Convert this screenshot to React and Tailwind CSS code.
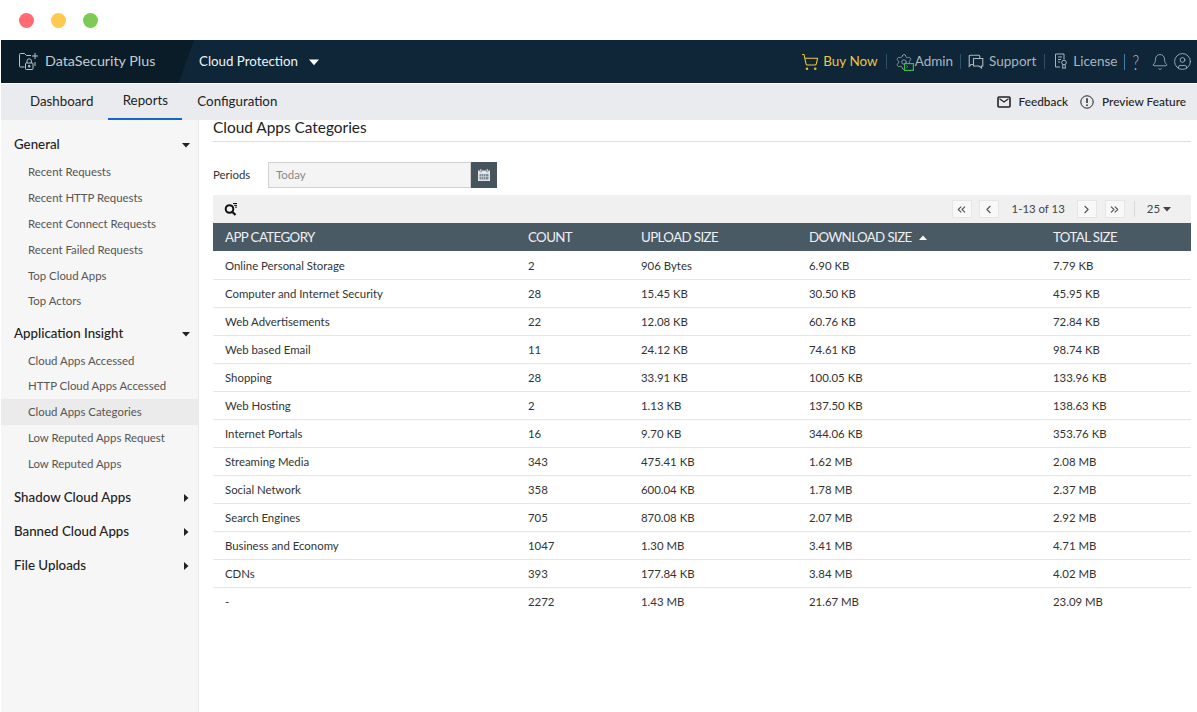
import React from "react";
import { ChevronsLeft, ChevronLeft, ChevronRight, ChevronsRight, ShoppingCart, Bell, CircleUser, Settings } from "lucide-react";

const rows = [
  ["Online Personal Storage", "2", "906 Bytes", "6.90 KB", "7.79 KB"],
  ["Computer and Internet Security", "28", "15.45 KB", "30.50 KB", "45.95 KB"],
  ["Web Advertisements", "22", "12.08 KB", "60.76 KB", "72.84 KB"],
  ["Web based Email", "11", "24.12 KB", "74.61 KB", "98.74 KB"],
  ["Shopping", "28", "33.91 KB", "100.05 KB", "133.96 KB"],
  ["Web Hosting", "2", "1.13 KB", "137.50 KB", "138.63 KB"],
  ["Internet Portals", "16", "9.70 KB", "344.06 KB", "353.76 KB"],
  ["Streaming Media", "343", "475.41 KB", "1.62 MB", "2.08 MB"],
  ["Social Network", "358", "600.04 KB", "1.78 MB", "2.37 MB"],
  ["Search Engines", "705", "870.08 KB", "2.07 MB", "2.92 MB"],
  ["Business and Economy", "1047", "1.30 MB", "3.41 MB", "4.71 MB"],
  ["CDNs", "393", "177.84 KB", "3.84 MB", "4.02 MB"],
  ["-", "2272", "1.43 MB", "21.67 MB", "23.09 MB"],
];

const Caret = ({ dir = "down", className = "" }) => (
  <svg width="8" height="8" viewBox="0 0 8 8" className={className} fill="currentColor">
    {dir === "down" && <path d="M0 2h8L4 6.500z" />}
    {dir === "right" && <path d="M2 0v8l4.500-4z" />}
    {dir === "up" && <path d="M0 6h8L4 1.500z" />}
  </svg>
);

const Logo = () => (
  <svg width="21" height="20" viewBox="0 0 21 20" fill="none" stroke="#b9c4cb" strokeWidth="1">
    <path d="M6.500 15H2.500a1 1 0 0 1-1-1V2.500a1 1 0 0 1 1-1h4l2 2H13" />
    <path d="M17 1v6M14 4h6" />
    <path d="M17 10v4" />
    <rect x="7.500" y="11" width="7.500" height="6.500" rx="0.800" />
    <path d="M9 11V9a2.200 2.200 0 0 1 4.400 0v2" />
    <circle cx="11.200" cy="14.200" r="0.900" fill="#b9c4cb" />
  </svg>
);

const AdminIcon = () => (
  <span className="relative block w-[19px] h-[18px]">
    <Settings size={18} strokeWidth={1.100} className="text-[#9aabb6]" />
    <svg width="10" height="8" viewBox="0 0 10 8" fill="none" className="absolute right-0 bottom-0">
      <rect x="0.600" y="0.600" width="8.800" height="6.800" fill="#0e2638" stroke="#3fb54a" strokeWidth="1.200" />
      <path d="M2.300 2.500l1.500 1.200-1.500 1.200" stroke="#3fb54a" strokeWidth="0.800" />
    </svg>
  </span>
);

const ChatIcon = () => (
  <svg width="16" height="15" viewBox="0 0 16 15" fill="none" stroke="#a9b6bf" strokeWidth="1.100">
    <path d="M5 10.500H3l-1.800 1.800V2.200a1 1 0 0 1 1-1h8.600a1 1 0 0 1 1 1V4" />
    <path d="M5.500 4.500h9.300v7.500H13.500v2L11 12H5.500z" />
  </svg>
);

const LicenseIcon = () => (
  <svg width="15" height="17" viewBox="0 0 15 17" fill="none" stroke="#a9b6bf" strokeWidth="1">
    <path d="M6 14H1.500V1h8.500v5.500" />
    <path d="M4 4h4M4 6.500h3M4 9h2" />
    <circle cx="10" cy="9.500" r="2.300" />
    <path d="M8.700 11.500v4l1.300-.8 1.300.8v-4" />
  </svg>
);

const MailIcon = () => (
  <svg width="14" height="12" viewBox="0 0 14 12" fill="none" stroke="#222" strokeWidth="1.600">
    <rect x="1" y="1" width="12" height="10" rx="1" />
    <path d="M2.500 2.800L7 6l4.500-3.200" strokeWidth="1.100" />
  </svg>
);

const Calendar = () => (
  <svg width="14" height="14" viewBox="0 0 14 14">
    <path d="M1 2.500h12V13H1z" fill="#e3e6e8" />
    <path d="M3 1h1.500v3H3zM9.500 1H11v3H9.500z" fill="#e3e6e8" stroke="#4a5a64" strokeWidth="0.400" />
    <path d="M2.500 6h9v5.500h-9z" fill="#7d8b94" />
    <path d="M4.500 6v5.500M6.500 6v5.500M8.500 6v5.500M2.500 8.500h9" stroke="#e3e6e8" strokeWidth="0.500" />
  </svg>
);

const SearchFilter = () => (
  <svg width="14" height="14" viewBox="0 0 14 14" fill="none" stroke="#111">
    <circle cx="5.500" cy="7" r="3.800" strokeWidth="2" />
    <path d="M8.500 10l3 3" strokeWidth="2.200" />
    <path d="M9 1.500h4M10 3.300h3M11 5.100h2" strokeWidth="1" />
  </svg>
);

const Alert = () => (
  <svg width="14" height="14" viewBox="0 0 14 14" fill="none" stroke="#222">
    <circle cx="7" cy="7" r="6.200" strokeWidth="1" />
    <path d="M7 3.300v4.800" strokeWidth="1.500" />
    <path d="M7 9.400v1.500" strokeWidth="1.500" />
  </svg>
);

const Sep = ({ c = "bg-[#2f5166]", h = "h-[15px]" }) => <span className={`block w-px ${h} ${c}`} />;

const Group = ({ title, open, items = [], active, className = "", headClass = "h-[28px]" }) => (
  <div className={className}>
    <div className={`${headClass} flex items-center justify-between pl-[13px] pr-[8px] text-[13.300px] font-medium text-[#222]`}>
      <span>{title}</span>
      <Caret dir={open ? "down" : "right"} className="text-[#222]" />
    </div>
    {items.map((it) => (
      <div
        key={it}
        className={`h-[25.800px] flex items-center pl-[27px] text-[11.400px] text-[#555] ${it === active ? "bg-[#ebebeb]" : ""}`}
      >
        {it}
      </div>
    ))}
  </div>
);

const PageBtn = ({ children, className = "" }) => (
  <span className={`w-[20px] h-[18px] flex items-center justify-center bg-[#f8f8f8] border border-[#e6e6e6] text-[#555] ${className}`}>
    {children}
  </span>
);

export default function App() {
  return (
    <div className="w-[1197px] h-[712px] overflow-hidden bg-white pl-px flex flex-col font-['Lato','Liberation_Sans',sans-serif] text-[#333]">
      <div className="h-[40px] flex items-center gap-[17px] pl-[18px] shrink-0">
        <span className="w-[15px] h-[15px] rounded-full bg-[#ff6b70]" />
        <span className="w-[15px] h-[15px] rounded-full bg-[#ffc84f]" />
        <span className="w-[15px] h-[15px] rounded-full bg-[#7bcb55]" />
      </div>

      <header className="h-[43px] bg-[#0e2638] flex items-center shrink-0">
        <div className="h-full w-[193px] bg-[#0a1c28] [clip-path:polygon(0_0,100%_0,92%_100%,0_100%)] flex items-center pl-[17px] gap-[6px] text-[#c3ccd2]">
          <Logo />
          <span className="text-[14.300px] leading-none">DataSecurity Plus</span>
        </div>
        <span className="ml-[5px] text-[#f1f3f4] text-[13.300px]">Cloud Protection</span>
        <Caret className="ml-[11px] mt-[1px] text-white w-[10px] h-[10px]" />
        <div className="ml-auto flex items-center pr-[5px] text-[#a9b6bf] text-[13.500px]">
          <ShoppingCart size={18} strokeWidth={1.400} className="text-[#f2c53d]" />
          <span className="ml-[4px] text-[#f2c53d]">Buy Now</span>
          <span className="ml-[8px]"><Sep /></span>
          <span className="ml-[8px]"><AdminIcon /></span>
          <span className="ml-px">Admin</span>
          <span className="ml-[7px]"><Sep /></span>
          <span className="ml-[7px]"><ChatIcon /></span>
          <span className="ml-[5px]">Support</span>
          <span className="ml-[8px]"><Sep /></span>
          <span className="ml-[9px]"><LicenseIcon /></span>
          <span className="ml-[4px]">License</span>
          <span className="ml-[7px]"><Sep c="bg-[#3f7fa8]" h="h-[16px]" /></span>
          <span className="ml-[6px] inline-block scale-x-[0.7] text-[22px] font-light leading-none">?</span>
          <Bell size={18} strokeWidth={1.100} className="ml-[10px]" />
          <CircleUser size={19} strokeWidth={1.100} className="ml-[4px]" />
        </div>
      </header>

      <nav className="h-[36px] mt-px bg-[#e9ebee] flex items-stretch shrink-0 text-[13.300px] text-[#222]">
        <span className="ml-[29px] flex items-center">Dashboard</span>
        <span className="ml-[15px] w-[74px] flex items-center justify-center border-b-2 border-[#1166cc]">Reports</span>
        <span className="ml-[15px] flex items-center">Configuration</span>
        <div className="ml-auto flex items-center pr-[11px] text-[11.800px] font-medium text-[#222]">
          <MailIcon />
          <span className="ml-[8px]">Feedback</span>
          <span className="ml-[12px]"><Alert /></span>
          <span className="ml-[8px]">Preview Feature</span>
        </div>
      </nav>

      <div className="flex-1 flex min-h-0">
        <aside className="w-[198px] shrink-0 bg-[#f6f6f6] border-r border-[#e9e9e9] pt-[11px]">
          <Group
            title="General"
            open
            items={["Recent Requests", "Recent HTTP Requests", "Recent Connect Requests", "Recent Failed Requests", "Top Cloud Apps", "Top Actors"]}
          />
          <Group
            title="Application Insight"
            open
            className="mt-[7.500px]"
            headClass="h-[26px]"
            active="Cloud Apps Categories"
            items={["Cloud Apps Accessed", "HTTP Cloud Apps Accessed", "Cloud Apps Categories", "Low Reputed Apps Request", "Low Reputed Apps"]}
          />
          <Group title="Shadow Cloud Apps" className="mt-[8px]" />
          <Group title="Banned Cloud Apps" className="mt-[6px]" />
          <Group title="File Uploads" className="mt-[6px]" />
        </aside>

        <main className="flex-1 min-w-0 pl-[14px] pr-[6px]">
          <h1 className="h-[22px] border-b border-[#dddddd] text-[15.400px] leading-[14px] text-[#222]">Cloud Apps Categories</h1>
          <div className="mt-[20px] h-[26px] flex items-center text-[11.400px]">
            <span className="w-[55px] text-[#333]">Periods</span>
            <span className="w-[203px] h-[26px] flex items-center pl-[7px] bg-[#f4f4f4] border border-[#d2d2d2] text-[#888]">Today</span>
            <span className="w-[26px] h-[26px] flex items-center justify-center bg-[#46545d]"><Calendar /></span>
          </div>

          <div className="mt-[7px] h-[28px] bg-[#f0f0f0] flex items-center pl-[11px] pr-[20px] text-[11.400px] text-[#444]">
            <SearchFilter />
            <div className="ml-auto flex items-center">
              <PageBtn><ChevronsLeft size={13} /></PageBtn>
              <PageBtn className="ml-[7px]"><ChevronLeft size={13} /></PageBtn>
              <span className="ml-[13px] whitespace-nowrap">1-13 of 13</span>
              <PageBtn className="ml-[12px]"><ChevronRight size={13} /></PageBtn>
              <PageBtn className="ml-[8px]"><ChevronsRight size={13} /></PageBtn>
              <span className="ml-[9px] w-px h-[16px] bg-[#d8d8d8]" />
              <span className="ml-[12px]">25</span>
              <Caret className="ml-[3px]" />
            </div>
          </div>

          <table className="w-full table-fixed border-collapse text-[11.400px]">
            <colgroup>
              <col className="w-[303px]" />
              <col className="w-[113px]" />
              <col className="w-[168px]" />
              <col className="w-[244px]" />
              <col />
            </colgroup>
            <thead>
              <tr className="h-[28px] bg-[#4a5a64] text-[#eef0f1] text-[13.300px] tracking-[-0.600px]">
                <th className="pl-[12px] pt-px text-left font-normal">APP CATEGORY</th>
                <th className="pl-[12px] pt-px text-left font-normal">COUNT</th>
                <th className="pl-[12px] pt-px text-left font-normal">UPLOAD SIZE</th>
                <th className="pl-[12px] pt-px text-left font-normal">
                  <span className="inline-flex items-center">DOWNLOAD SIZE<Caret dir="up" className="ml-[7px] text-white" /></span>
                </th>
                <th className="pl-[12px] pt-px text-left font-normal">TOTAL SIZE</th>
              </tr>
            </thead>
            <tbody>
              {rows.map((r) => (
                <tr key={r[0]} className="h-[28px] border-b border-[#e6e6e6] last:border-b-0">
                  {r.map((c, i) => (
                    <td key={i} className="pl-[12px] pt-px text-[#333]">{c}</td>
                  ))}
                </tr>
              ))}
            </tbody>
          </table>
        </main>
      </div>
    </div>
  );
}
